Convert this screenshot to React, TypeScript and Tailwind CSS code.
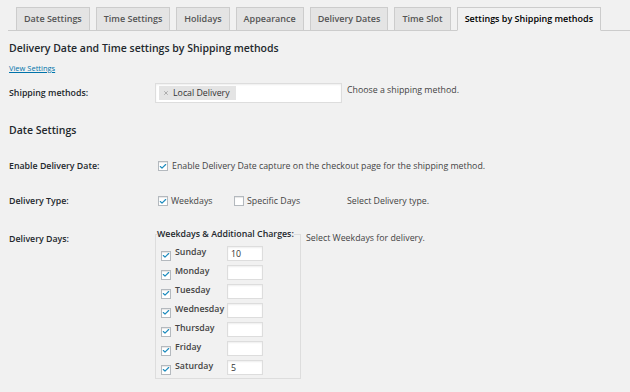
import { Check, X } from 'lucide-react';

const tabs = ['Date Settings', 'Time Settings', 'Holidays', 'Appearance', 'Delivery Dates', 'Time Slot', 'Settings by Shipping methods'];

const days = [
  { name: 'Sunday', charge: '10' },
  { name: 'Monday', charge: '' },
  { name: 'Tuesday', charge: '' },
  { name: 'Wednesday', charge: '' },
  { name: 'Thursday', charge: '' },
  { name: 'Friday', charge: '' },
  { name: 'Saturday', charge: '5' },
];

// 小复选框
function Box({ checked }: { checked: boolean }) {
  return (
    <span className="w-[10px] h-[10px] border border-[#b4b9be] bg-white shadow-[inset_0_1px_1px_rgba(0,0,0,0.1)] flex items-center justify-center shrink-0">
      {checked && <Check className="w-[9px] h-[9px] text-[#1e8cbe]" strokeWidth={3.5} />}
    </span>
  );
}

export default function App() {
  return (
    <div className="w-[630px] h-[392px] bg-[#f1f1f1] text-[#32373c] overflow-hidden" style={{ fontFamily: '"Open Sans", "Liberation Sans", sans-serif' }}>
      {/* 标签栏 */}
      <div className="flex items-end gap-[6px] pl-[8px] pt-[7px] border-b border-[#ccc] ml-[8px]">
        {tabs.map((t, i) => {
          const active = i === tabs.length - 1;
          return (
            <div
              key={t}
              className={`h-[24px] px-[7px] flex items-center whitespace-nowrap text-[9px] font-semibold border border-[#ccc] -mb-px ${
                active ? 'bg-[#f1f1f1] border-b-[#f1f1f1] text-[#000]' : 'bg-[#e4e4e4] text-[#555]'
              }`}
            >
              {t}
            </div>
          );
        })}
      </div>

      <div className="pl-[9px] text-[8.8px]">
        <h2 className="text-[10.5px] font-semibold text-[#23282d] mt-[10px] leading-[14px]">Delivery Date and Time settings by Shipping methods</h2>
        <a className="block text-[7.5px] text-[#0073aa] underline mt-[8px] leading-[10px]">View Settings</a>

        {/* 配送方式 */}
        <div className="flex items-start mt-[10px] leading-[12px]">
          <div className="w-[146px] font-semibold text-[#23282d] pt-[4px]">Shipping methods:</div>
          <div className="w-[187px] h-[20px] bg-white border border-[#ddd] shadow-[inset_0_1px_2px_rgba(0,0,0,0.07)] flex items-center px-[3px]">
            <span className="h-[14px] bg-[#e4e4e4] flex items-center gap-[4px] px-[4px] pr-[6px] text-[#333]">
              <X className="w-[6px] h-[6px] text-[#999]" strokeWidth={3} />
              Local Delivery
            </span>
          </div>
          <div className="ml-[5px] pt-[1px] text-[#444]">Choose a shipping method.</div>
        </div>

        <h3 className="text-[10.5px] font-semibold text-[#23282d] mt-[20px] leading-[14px]">Date Settings</h3>

        <div className="flex items-center mt-[23px] leading-[12px]">
          <div className="w-[149px] font-semibold text-[#23282d]">Enable Delivery Date:</div>
          <Box checked />
          <span className="ml-[4px] text-[#444]">Enable Delivery Date capture on the checkout page for the shipping method.</span>
        </div>

        <div className="flex items-center mt-[23px] leading-[12px]">
          <div className="w-[149px] font-semibold text-[#23282d]">Delivery Type:</div>
          <Box checked />
          <span className="ml-[3px] w-[63px] text-[#444]">Weekdays</span>
          <Box checked={false} />
          <span className="ml-[3px] w-[100px] text-[#444]">Specific Days</span>
          <span className="text-[#444]">Select Delivery type.</span>
        </div>

        {/* 配送日期 */}
        <div className="flex items-start mt-[25px] leading-[12px]">
          <div className="w-[146px] font-semibold text-[#23282d] pt-[1px]">Delivery Days:</div>
          <fieldset className="w-[146px] border border-[#ddd] px-[5px] pb-[3px] -mt-[4px]">
            <legend className="font-semibold text-[#23282d] whitespace-nowrap px-0 -ml-[4px]">Weekdays &amp; Additional Charges:</legend>
            <div className="flex flex-col gap-[4px] pt-[6px]">
              {days.map((d) => (
                <div key={d.name} className="flex items-center h-[15px]">
                  <div className="pt-[4px]">
                    <Box checked />
                  </div>
                  <span className="ml-[4px] w-[52px] font-semibold text-[#444] -mt-[3px]">{d.name}</span>
                  <div className="w-[36px] h-[15px] bg-white border border-[#ddd] shadow-[inset_0_1px_2px_rgba(0,0,0,0.07)] px-[3px] flex items-center text-[#333]">
                    {d.charge}
                  </div>
                </div>
              ))}
            </div>
          </fieldset>
          <div className="ml-[5px] text-[#444]">Select Weekdays for delivery.</div>
        </div>
      </div>
    </div>
  );
}
